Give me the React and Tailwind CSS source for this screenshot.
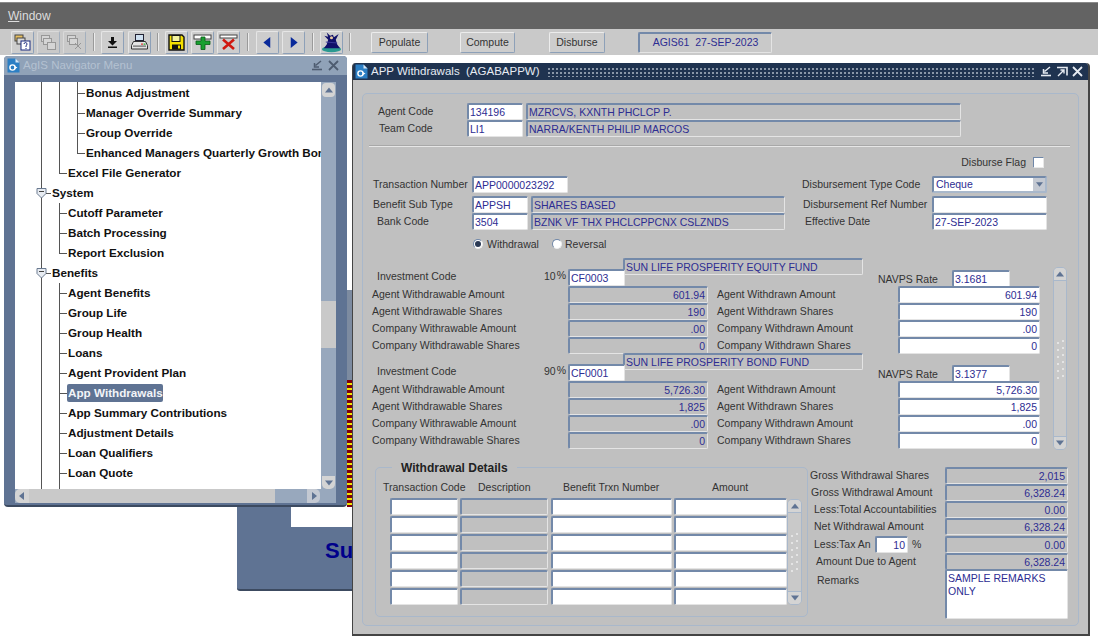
import React from "react";

const L = ({ children, className = "" }) => (
  <span className={"block whitespace-nowrap text-[10.5px] leading-none text-[#333333] " + className}>{children}</span>
);

const F = ({ v = "", ro = false, right = false, className = "" }) => (
  <div
    className={
      "flex h-[17px] shrink-0 items-center overflow-hidden whitespace-nowrap rounded-[2px] border-t-2 border-l-2 border-r border-b border-t-[#7389a9] border-l-[#7389a9] border-r-[#e4e4e4] border-b-[#e4e4e4] pl-[1px] pr-[2px] text-[10.5px] leading-none text-[#2d2d92] " +
      (ro ? "bg-[#c0c0c0] " : "bg-white ") +
      (right ? "justify-end " : "") +
      className
    }
  >
    {v}
  </div>
);

const Tri = ({ dir = "up", color = "#5f7393", size = 8 }) => {
  const pts = {
    up: "4,1.5 8,6.5 0,6.5",
    down: "0,1.5 8,1.5 4,6.5",
    left: "6,0 6,8 1,4",
    right: "2,0 2,8 7,4",
  }[dir];
  return (
    <svg width={size} height={size} viewBox="0 0 8 8">
      <polygon points={pts} fill={color} />
    </svg>
  );
};

const Grip = () => (
  <svg width="9" height="40" viewBox="0 0 9 40">
    {[2, 9, 16, 23, 30, 37].map((y) => (
      <g key={y} fill="#ececec">
        <circle cx="2" cy={y + 2} r="1" />
        <circle cx="7" cy={y} r="1" />
      </g>
    ))}
  </svg>
);

const VScroll = ({ className = "" }) => (
  <div className={"flex shrink-0 flex-col items-stretch rounded-[5px] border border-[#a9b8cb] bg-[#c9c9c9] " + className}>
    <div className="flex h-[13px] items-center justify-center rounded-t-[4px] border-b border-[#a9b8cb] bg-[#d4d4d4]">
      <Tri dir="up" />
    </div>
    <div className="flex flex-1 items-center justify-center">
      <Grip />
    </div>
    <div className="flex h-[13px] items-center justify-center rounded-b-[4px] border-t border-[#a9b8cb] bg-[#d4d4d4]">
      <Tri dir="down" />
    </div>
  </div>
);

const TB = ({ children, off = false }) => (
  <div
    className={
      "flex h-[23px] w-[23px] shrink-0 items-center justify-center rounded-[2px] border border-t-[#e6e6e6] border-l-[#e6e6e6] border-r-[#8da0b8] border-b-[#8da0b8] " +
      (off ? "bg-[#c9c9c9] opacity-60" : "bg-[#cdcdcd]")
    }
  >
    {children}
  </div>
);

const Sep = ({ className = "" }) => <div className={"h-[18px] w-[2px] shrink-0 border-l border-r border-l-[#9a9a9a] border-r-[#ececec] " + className} />;

const TextBtn = ({ children, className = "" }) => (
  <div className={"flex h-[21px] shrink-0 items-center justify-center rounded-[2px] border border-t-[#ececec] border-l-[#ececec] border-r-[#8da0b8] border-b-[#8da0b8] bg-[#cdcdcd] text-[10.5px] leading-none text-[#333333] " + className}>
    {children}
  </div>
);

const DocIcon = () => (
  <svg width="13" height="15" viewBox="0 0 13 15" className="shrink-0">
    <path d="M0.5 0.5h8l4 4v10h-12z" fill="#2c7fc4" />
    <path d="M8.5 0.5v4h4z" fill="#d8e8f6" />
    <circle cx="5.5" cy="9.5" r="2.6" fill="none" stroke="#fff" strokeWidth="1.4" />
    <path d="M7.5 8l3 1.6-3 1.6z" fill="#fff" />
  </svg>
);

const Minimize = ({ color }) => (
  <svg width="12" height="11" viewBox="0 0 12 11">
    <path d="M1 9.5h10" stroke={color} strokeWidth="1.6" />
    <path d="M10 1L4.5 5.5M3.5 3v4h4.5" stroke={color} strokeWidth="1.5" fill="none" />
  </svg>
);
const Maximize = ({ color }) => (
  <svg width="12" height="11" viewBox="0 0 12 11">
    <path d="M1 1.5h10v8" stroke={color} strokeWidth="1.6" fill="none" />
    <path d="M2 10L7.5 4.5M4.5 4h3.5v3.5" stroke={color} strokeWidth="1.4" fill="none" />
  </svg>
);
const Close = ({ color }) => (
  <svg width="11" height="11" viewBox="0 0 11 11">
    <path d="M1 1l9 9M10 1l-9 9" stroke={color} strokeWidth="1.8" />
  </svg>
);

const Row = ({ t, lv, sel }) => {
  const pad = lv === 3 ? "pl-[71px]" : lv === 2 ? "pl-[53px]" : "pl-[37px]";
  return (
    <div className={"flex h-5 items-center " + pad}>
      <span
        className={
          "whitespace-nowrap rounded-[2px] text-[11.7px] font-bold leading-none " +
          (sel ? "-ml-[1px] flex h-[18px] w-[96px] items-center bg-[#5f7393] pl-[1px] text-[#f2f4f8]" : "text-[#111111]")
        }
      >
        {t}
      </span>
    </div>
  );
};

const tree = [
  ["Bonus Adjustment", 3],
  ["Manager Override Summary", 3],
  ["Group Override", 3],
  ["Enhanced Managers Quarterly Growth Bonus", 3],
  ["Excel File Generator", 2],
  ["System", 1],
  ["Cutoff Parameter", 2],
  ["Batch Processing", 2],
  ["Report Exclusion", 2],
  ["Benefits", 1],
  ["Agent Benefits", 2],
  ["Group Life", 2],
  ["Group Health", 2],
  ["Loans", 2],
  ["Agent Provident Plan", 2],
  ["App Withdrawals", 2, true],
  ["App Summary Contributions", 2],
  ["Adjustment Details", 2],
  ["Loan Qualifiers", 2],
  ["Loan Quote", 2],
];

const TreeLines = () => {
  const cy = (i) => 11 + i * 20;
  const c = "#555555";
  const conn = (x1, x2, y) => <path key={x1 + "-" + y} d={`M${x1} ${y + 0.5}H${x2}`} stroke={c} />;
  const shield = (y) => (
    <g key={y}>
      <path d={`M22 ${y - 4.5}h9v5l-4.5 4.500l-4.500-4.500z`} fill="#e8ecf2" stroke="#6a7a90" />
      <path d={`M24 ${y - 1.5}h5`} stroke="#444" />
      <path d={`M31 ${y + 0.5}h5`} stroke={c} />
    </g>
  );
  return (
    <svg className="pointer-events-none absolute left-0 top-0" width="306" height="407" viewBox="0 0 306 407">
      <g fill="none" stroke={c}>
        <path d="M26.5 0V407" />
        <path d={`M44.5 0V${cy(4)}`} />
        <path d={`M62.5 0V${cy(3)}`} />
        <path d={`M44.5 ${cy(5) + 10}V${cy(8)}`} />
        <path d={`M44.5 ${cy(9) + 10}V407`} />
      </g>
      {[0, 1, 2, 3].map((i) => conn(62, 70, cy(i)))}
      {[4, 6, 7, 8, 10, 11, 12, 13, 14, 15, 16, 17, 18, 19].map((i) => conn(44, 52, cy(i)))}
      {shield(cy(5))}
      {shield(cy(9))}
    </svg>
  );
};

const Radio = ({ on }) => (
  <div className="flex h-[10px] w-[10px] shrink-0 items-center justify-center rounded-full border border-t-[#6f87a8] border-l-[#6f87a8] border-r-[#eeeeee] border-b-[#eeeeee] bg-white">
    {on && <div className="h-[6px] w-[6px] rounded-full bg-[#2b3a55]" />}
  </div>
);

const FundRow = ({ l, a, r, b }) => (
  <div className="flex h-[17px] items-center">
    <div className="w-[205px] pl-[9px]"><L>{l}</L></div>
    <F ro right v={a} className="w-[140px]" />
    <div className="ml-[9px] w-[181px]"><L>{r}</L></div>
    <F right v={b} className="w-[142px]" />
  </div>
);

const Fund = ({ name, pct, code, nav, rows, className = "" }) => (
  <div className={className}>
    <div className="flex h-[28px] items-start">
      <div className="mt-[10px] flex h-[17px] w-[205px] items-center pl-[14px] pr-[1px]">
        <L>Investment Code</L>
        <L className="ml-auto">{pct}</L>
        <L className="-mt-[2px] ml-[1px] pr-[1px]">%</L>
      </div>
      <F v={code} className="relative z-10 mt-[11px] w-[57px]" />
      <F ro v={name} className="-ml-[2px] w-[240px]" />
      <div className="ml-[15px] mt-[16px] w-[74px]"><L>NAVPS Rate</L></div>
      <F v={nav} className="mt-[12px] h-[16px] w-[58px]" />
    </div>
    {rows.map((r) => (
      <FundRow key={r[0]} l={r[0]} a={r[1]} r={r[2]} b={r[1]} />
    ))}
  </div>
);

const fundRows = (a, s) => [
  ["Agent Withdrawable Amount", a, "Agent Withdrawn Amount"],
  ["Agent Withdrawable Shares", s, "Agent Withdrawn Shares"],
  ["Company Withrawable Amount", ".00", "Company Withdrawn Amount"],
  ["Company Withdrawable Shares", "0", "Company Withdrawn Shares"],
];

const totals = [
  ["Gross Withdrawal Shares", "2,015", "pl-0"],
  ["Gross Withdrawal Amount", "6,328.24", "pl-[1px]"],
  ["Less:Total Accountabilities", "0.00", "pl-[4px]"],
  ["Net Withdrawal Amount", "6,328.24", "pl-[4px]"],
];

export default function App() {
  return (
    <div className="relative h-[640px] w-[1098px] overflow-hidden bg-white font-['Liberation_Sans',Arial,sans-serif]">
      {/* menu bar */}
      <div className="mt-[2px] flex h-[27px] items-center border-t border-[#8a8a8a] bg-[#636363] pl-[8px] text-[12px] leading-none text-[#dddddd]">
        <span><span className="underline">W</span>indow</span>
      </div>

      {/* toolbar */}
      <div className="flex h-[26px] items-center bg-[#c9c9c9] pl-[11px]">
        <TB>
          <svg width="17" height="17" viewBox="0 0 17 17">
            <rect x="1" y="1" width="8" height="6" fill="#e8c060" stroke="#444" />
            <rect x="3" y="4" width="8" height="6" fill="#d8d8d8" stroke="#444" />
            <rect x="7" y="7" width="9" height="9" fill="#fff" stroke="#1a2a80" />
            <path d="M10 10a1.5 1.5 0 1 1 2 1.5v1.5M12 14v1" stroke="#1a2a80" fill="none" />
          </svg>
        </TB>
        <div className="w-[3px]" />
        <TB off>
          <svg width="17" height="17" viewBox="0 0 17 17" fill="#ddd" stroke="#777">
            <rect x="1.5" y="1.5" width="8" height="6" />
            <rect x="3.5" y="4.5" width="8" height="6" />
            <rect x="7.5" y="8.5" width="8" height="7" />
          </svg>
        </TB>
        <div className="w-[3px]" />
        <TB off>
          <svg width="17" height="17" viewBox="0 0 17 17" fill="#ddd" stroke="#777">
            <rect x="1.5" y="1.5" width="8" height="6" />
            <rect x="3.5" y="4.5" width="8" height="6" />
            <path d="M9 9l6 6M15 9l-6 6" />
          </svg>
        </TB>
        <Sep className="ml-[7px] mr-[6px]" />
        <TB>
          <svg width="13" height="13" viewBox="0 0 13 13">
            <path d="M5 1h3v4h3l-4.500 4.500L2 5h3z" fill="#111" />
            <rect x="2" y="10.500" width="9" height="1.500" fill="#111" />
          </svg>
        </TB>
        <div className="w-[4px]" />
        <TB>
          <svg width="19" height="18" viewBox="0 0 19 18">
            <rect x="5.500" y="1.500" width="8" height="6" fill="#cfe0f0" stroke="#223" />
            <path d="M3.500 8.500h12l2 4v3.500h-16v-3.500z" fill="#e4e4e4" stroke="#333" />
            <rect x="3" y="12.500" width="13" height="1.200" fill="#666" />
            <rect x="11" y="10.500" width="2" height="1.200" fill="#d33" />
            <rect x="13.500" y="10.500" width="2" height="1.200" fill="#2a2" />
          </svg>
        </TB>
        <Sep className="ml-[6px] mr-[6px]" />
        <TB>
          <svg width="17" height="17" viewBox="0 0 17 17">
            <path d="M1 1h13l2 2v13h-15z" fill="#f4e000" stroke="#111" strokeWidth="1.400" />
            <rect x="4" y="1.500" width="8" height="6" fill="#f4f4a0" stroke="#111" />
            <rect x="4" y="10.500" width="9" height="5" fill="#111" />
            <rect x="10" y="11.500" width="2" height="3" fill="#f4e000" />
          </svg>
        </TB>
        <div className="w-[3px]" />
        <TB>
          <svg width="19" height="16" viewBox="0 0 19 16">
            <rect x="1" y="1" width="17" height="4" fill="#fff" stroke="#444" />
            <path d="M8 3h4v4h5v3.500h-5v5h-4v-5h-5v-3.500h5z" fill="#18a030" stroke="#0a5a18" strokeWidth="0.800" />
          </svg>
        </TB>
        <div className="w-[3px]" />
        <TB>
          <svg width="19" height="16" viewBox="0 0 19 16">
            <rect x="1" y="1" width="17" height="3" fill="#fff" stroke="#444" />
            <path d="M4 5.500l11 9.500M15 5.500l-11 9.500" stroke="#d01810" strokeWidth="2.600" />
          </svg>
        </TB>
        <Sep className="ml-[7px] mr-[7px]" />
        <TB><Tri dir="left" color="#0a2a9a" size={11} /></TB>
        <div className="w-[3px]" />
        <TB><Tri dir="right" color="#0a2a9a" size={11} /></TB>
        <Sep className="ml-[7px] mr-[6px]" />
        <TB>
          <svg width="22" height="21" viewBox="0 0 22 21">
            <ellipse cx="11" cy="17.500" rx="10" ry="3.200" fill="#2a9a90" />
            <path d="M6 0l3.500 3.500 3-1 1 2.500 5-3.500-3 6 1.500 5 3 4h-17l3-4 1.500-5-4-4 4 1z" fill="#10106a" />
            <circle cx="11" cy="5.500" r="1.600" fill="#e8c8a0" />
            <path d="M5 10l12 1" stroke="#3a3a9a" strokeWidth="1" />
          </svg>
        </TB>
        <Sep className="ml-[6px]" />
        <TextBtn className="ml-[20px] w-[57px]">Populate</TextBtn>
        <TextBtn className="ml-[32px] w-[55px]">Compute</TextBtn>
        <TextBtn className="ml-[34px] w-[56px]">Disburse</TextBtn>
        <div className="ml-[33px] flex h-[21px] w-[134px] items-center justify-center whitespace-pre rounded-[2px] border-t-2 border-l-2 border-r border-b border-t-[#7389a9] border-l-[#7389a9] border-r-[#e4e4e4] border-b-[#e4e4e4] text-[10.5px] leading-none text-[#2d2d92]">
          AGIS61  27-SEP-2023
        </div>
      </div>

      {/* background form behind the windows */}
      <div className="absolute left-[237px] top-[507px] flex h-[84px] w-[120px] flex-col rounded-bl-[3px] border-b-2 border-[#3c4a60] bg-[#5f7393]">
        <div className="ml-[54px] h-[20px] bg-white" />
        <div className="ml-[88px] mt-[13px] whitespace-nowrap text-[22px] font-bold leading-none text-[#00008b]">Su</div>
      </div>
      <div className="absolute left-[347px] top-[290px] h-[90px] w-[6px] bg-[#7d8ba0]" />
      <div className="absolute left-[347px] top-[380px] h-[127px] w-[6px] bg-[repeating-linear-gradient(180deg,#7a0010_0px,#7a0010_3px,#f4e400_3px,#f4e400_5px)]" />

      {/* navigator window */}
      <div className="absolute left-[4px] top-[56px] flex h-[451px] w-[343px] flex-col rounded-[4px] border-b-2 border-[#3c4a60] bg-[#5f7393]">
        <div className="flex h-[19px] shrink-0 items-center rounded-t-[4px] bg-[#90a2b8] pl-[3px] pr-[8px]">
          <DocIcon />
          <span className="ml-[3px] text-[11.5px] leading-none text-[#b4c1d1]">AgIS Navigator Menu</span>
          <div className="ml-auto flex items-center gap-[5px]">
            <Minimize color="#4e5c70" />
            <Close color="#4e5c70" />
          </div>
        </div>
        <div className="ml-[11px] mt-[7px] flex h-[407px]">
          <div className="relative h-[407px] w-[306px] overflow-hidden bg-white pt-[1px]">
            <TreeLines />
            {tree.map((r) => (
              <Row key={r[0]} t={r[0]} lv={r[1]} sel={r[2]} />
            ))}
          </div>
          <div className="flex w-[15px] flex-col bg-[#98a8bd]">
            <div className="mx-[1px] mt-[1px] flex h-[14px] items-center justify-center rounded-[4px] bg-[#d4d4d4]"><Tri dir="up" /></div>
            <div className="mt-[204px] h-[47px] bg-[#c9c9c9]" />
            <div className="mx-[1px] mt-auto flex h-[13px] items-center justify-center rounded-b-[5px] bg-[#d4d4d4]"><Tri dir="down" /></div>
          </div>
        </div>
        <div className="ml-[11px] flex h-[14px] w-[321px] bg-[#98a8bd]">
          <div className="flex w-[14px] items-center justify-center rounded-l-[5px] bg-[#d4d4d4]"><Tri dir="left" /></div>
          <div className="w-[246px] bg-[#c9c9c9]" />
          <div className="w-[32px]" />
          <div className="flex w-[13px] items-center justify-center rounded-r-[5px] bg-[#c4c9d2]"><Tri dir="right" /></div>
        </div>
      </div>

      {/* AGABAPPW window */}
      <div className="absolute left-[352px] top-[63px] flex h-[573px] w-[738px] flex-col rounded-t-[4px] border-b-2 border-l border-r-2 border-[#444444] bg-[#c2c2c2]">
        <div className="flex h-[17px] shrink-0 items-center rounded-t-[3px] bg-[#1f3350] pl-[2px] pr-[5px]">
          <DocIcon />
          <span className="ml-[3px] whitespace-pre text-[11.5px] leading-none text-[#e6ebf2]">APP Withdrawals  (AGABAPPW)</span>
          <div className="ml-[7px] h-[10px] flex-1 bg-[radial-gradient(circle,#8a97a8_0.8px,transparent_1px)] bg-[length:4px_4px]" />
          <div className="ml-[5px] flex items-center gap-[4px]">
            <Minimize color="#e6ebf2" />
            <Maximize color="#e6ebf2" />
            <Close color="#e6ebf2" />
          </div>
        </div>

        <div className="ml-[9px] mt-[13px] h-[533px] w-[717px] rounded-[5px] border border-[#a9b8cb] bg-[#c0c0c0]">
          {/* agent */}
          <div className="mt-[9px] flex h-[17px] items-center">
            <div className="w-[104px] pl-[15px]"><L>Agent Code</L></div>
            <F v="134196" className="w-[56px]" />
            <F ro v="MZRCVS, KXNTH PHCLCP P." className="ml-[3px] w-[435px]" />
          </div>
          <div className="flex h-[17px] items-center">
            <div className="w-[104px] pl-[16px]"><L>Team Code</L></div>
            <F v="LI1" className="w-[56px]" />
            <F ro v="NARRA/KENTH PHILIP MARCOS" className="ml-[3px] w-[435px]" />
          </div>
          <div className="ml-[6px] mt-[8px] h-[2px] w-[701px] border-t border-b border-t-[#a8a8a8] border-b-[#e6e6e6]" />

          {/* disburse flag */}
          <div className="mt-[8px] flex h-[15px] items-center justify-end gap-[7px] pr-[34px]">
            <L>Disburse Flag</L>
            <div className="h-[11px] w-[11px] rounded-[1px] border border-t-[#6f87a8] border-l-[#6f87a8] border-r-[#e8e8e8] border-b-[#e8e8e8] bg-white" />
          </div>

          {/* transaction */}
          <div className="mt-[6px] flex h-[17px] items-center">
            <div className="flex w-[439px] items-center">
              <div className="w-[109px] pl-[10px]"><L>Transaction Number</L></div>
              <F v="APP0000023292" className="w-[96px]" />
            </div>
            <div className="w-[130px]"><L>Disbursement Type Code</L></div>
            <div className="flex h-[17px] w-[115px] items-center justify-between rounded-[2px] border-2 border-t-[#7389a9] border-l-[#7389a9] border-r-[#a9b8cb] border-b-[#a9b8cb] bg-white pl-[2px] text-[10.5px] leading-none text-[#2d2d92]">
              <span>Cheque</span>
              <div className="flex h-full w-[12px] items-center justify-center bg-[#c4c9d2]"><Tri dir="down" size={7} /></div>
            </div>
          </div>
          <div className="mt-[3px] flex h-[17px] items-center">
            <div className="flex w-[439px] items-center">
              <div className="w-[109px] pl-[10px]"><L>Benefit Sub Type</L></div>
              <F v="APPSH" className="w-[56px]" />
              <F ro v="SHARES BASED" className="ml-[3px] w-[254px]" />
            </div>
            <div className="w-[130px] pl-[1px]"><L>Disbursement Ref Number</L></div>
            <F className="w-[115px]" />
          </div>
          <div className="flex h-[17px] items-center">
            <div className="flex w-[439px] items-center">
              <div className="w-[109px] pl-[14px]"><L>Bank Code</L></div>
              <F v="3504" className="w-[56px]" />
              <F ro v="BZNK VF THX PHCLCPPCNX CSLZNDS" className="ml-[3px] w-[254px]" />
            </div>
            <div className="w-[130px] pl-[3px]"><L>Effective Date</L></div>
            <F v="27-SEP-2023" className="w-[115px]" />
          </div>

          {/* radios */}
          <div className="ml-[110px] mt-[7px] flex h-[14px] items-center">
            <Radio on />
            <L className="ml-[4px] w-[65px]">Withdrawal</L>
            <Radio />
            <L className="ml-[3px]">Reversal</L>
          </div>

          {/* funds */}
          <div className="mt-[7px] flex">
            <div className="w-[690px]">
              <Fund name="SUN LIFE PROSPERITY EQUITY FUND" pct="10" code="CF0003" nav="3.1681" rows={fundRows("601.94", "190")} />
              <Fund className="-mt-[1px]" name="SUN LIFE PROSPERITY BOND FUND" pct="90" code="CF0001" nav="3.1377" rows={fundRows("5,726.30", "1,825")} />
            </div>
            <VScroll className="mt-[9px] h-[183px] w-[14px]" />
          </div>

          {/* bottom */}
          <div className="mt-[17px] flex items-start">
            <div className="relative ml-[12px] h-[150px] w-[433px] shrink-0 rounded-[5px] border border-[#a9b8cb]">
              <div className="absolute -top-[7px] left-[16px] bg-[#c0c0c0] px-[9px] text-[12px] font-bold leading-[14px] text-[#222222]">Withdrawal Details</div>
              <div className="mt-[13px] flex h-[12px] items-center">
                <L className="ml-[7px] w-[95px]">Transaction Code</L>
                <L className="w-[85px]">Description</L>
                <L className="w-[149px]">Benefit Trxn Number</L>
                <L>Amount</L>
              </div>
              <div className="mt-[4px] flex">
                <div className="ml-[14px] w-[398px]">
                  {[0, 1, 2, 3, 4, 5].map((i) => (
                    <div key={i} className="flex h-[18px] items-center">
                      <F className="w-[68px]" />
                      <F ro className="ml-[2px] w-[88px]" />
                      <F className="ml-[3px] w-[121px]" />
                      <F className="ml-[2px] w-[113px]" />
                    </div>
                  ))}
                </div>
                <VScroll className="-ml-[1px] mt-[2px] h-[106px] w-[15px]" />
              </div>
            </div>

            <div className="ml-[2px] flex w-[258px] flex-col">
              {totals.map((r) => (
                <div key={r[0]} className="flex h-[17px] items-center">
                  <div className={"w-[135px] " + r[2]}><L>{r[0]}</L></div>
                  <F ro right v={r[1]} className="w-[123px]" />
                </div>
              ))}
              <div className="mt-[1px] flex h-[17px] items-center">
                <div className="flex w-[135px] items-center pl-[4px]">
                  <L className="w-[61px] overflow-hidden">Less:Tax An</L>
                  <F right v="10" className="h-[16px] w-[33px]" />
                  <L className="ml-[4px]">%</L>
                </div>
                <F ro right v="0.00" className="w-[123px]" />
              </div>
              <div className="flex h-[17px] items-center">
                <div className="w-[135px] pl-[6px]"><L>Amount Due to Agent</L></div>
                <F ro right v="6,328.24" className="w-[123px]" />
              </div>
              <div className="-mt-[1px] flex items-start">
                <div className="mt-[6px] w-[135px] pl-[7px]"><L>Remarks</L></div>
                <div className="h-[50px] w-[123px] rounded-[2px] border-t-2 border-l-2 border-r border-b border-t-[#7389a9] border-l-[#7389a9] border-r-[#e4e4e4] border-b-[#e4e4e4] bg-white px-[1px] pt-[1px] text-[10.5px] leading-[13px] text-[#2d2d92]">
                  SAMPLE REMARKS<br />ONLY
                </div>
              </div>
            </div>
          </div>
        </div>
      </div>
    </div>
  );
}
